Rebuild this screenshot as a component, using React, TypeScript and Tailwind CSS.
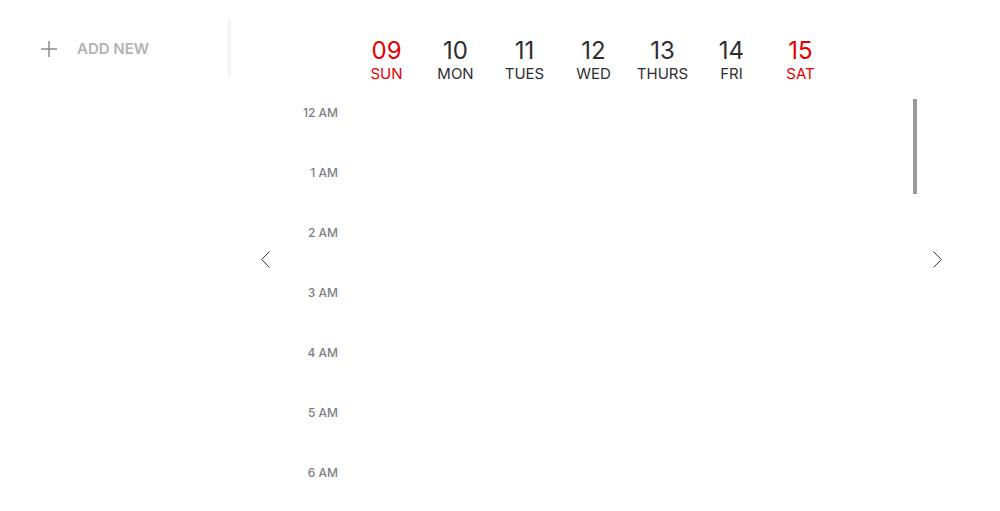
const days = [
  { num: "09", label: "SUN", weekend: true },
  { num: "10", label: "MON", weekend: false },
  { num: "11", label: "TUES", weekend: false },
  { num: "12", label: "WED", weekend: false },
  { num: "13", label: "THURS", weekend: false },
  { num: "14", label: "FRI", weekend: false },
  { num: "15", label: "SAT", weekend: true },
];

const hours = ["12 AM", "1 AM", "2 AM", "3 AM", "4 AM", "5 AM", "6 AM"];

export default function App() {
  return (
    <div className="flex h-[511px] w-[1000px] overflow-hidden bg-white font-['Inter',sans-serif]">
      <aside className="w-[231px] shrink-0">
        <div className="mt-[19px] flex h-[58px] items-center gap-[20px] border-r-[3px] border-[#f5f5f5] pl-[41px] pt-[2px]">
          <svg width="16" height="16" viewBox="0 0 16 16" className="shrink-0">
            <path d="M8 0v16M0 8h16" stroke="#8a8a8a" strokeWidth="1.5" fill="none" />
          </svg>
          <span className="text-[15px] font-semibold leading-[18px] text-[#b3b3b3]">ADD NEW</span>
        </div>
      </aside>

      <main className="relative flex flex-1 flex-col">
        <div className="flex pl-[121px] pt-[37px] pb-[14px]">
          {days.map((d) => (
            <div
              key={d.num}
              className={`flex w-[69px] flex-col items-center ${d.weekend ? "text-[#e30000]" : "text-[#2e2e33]"}`}
            >
              <span className="text-[24px] leading-[28px]">{d.num}</span>
              <span className="text-[15px] leading-[18px]">{d.label}</span>
            </div>
          ))}
        </div>

        <div className="flex flex-col">
          {hours.map((h) => (
            <div key={h} className="flex h-[60px] shrink-0">
              <div className="w-[120px] pr-[13px] pt-[9px] text-right text-[12px] font-medium leading-[14px] text-[#808080]">
                {h}
              </div>
              <div className="flex-1" />
            </div>
          ))}
        </div>

        <div className="absolute left-[682px] top-[99px] h-[95px] w-[4px] bg-[#9a9a9a]" />

        <button className="absolute left-[30px] top-[251px]">
          <svg width="9" height="17" viewBox="0 0 9 17">
            <polyline points="8.5,0.5 0.7,8.5 8.5,16.5" stroke="#333" strokeWidth="1" fill="none" />
          </svg>
        </button>
        <button className="absolute left-[702px] top-[251px]">
          <svg width="9" height="17" viewBox="0 0 9 17">
            <polyline points="0.5,0.5 8.3,8.5 0.5,16.5" stroke="#333" strokeWidth="1" fill="none" />
          </svg>
        </button>
      </main>
    </div>
  );
}
